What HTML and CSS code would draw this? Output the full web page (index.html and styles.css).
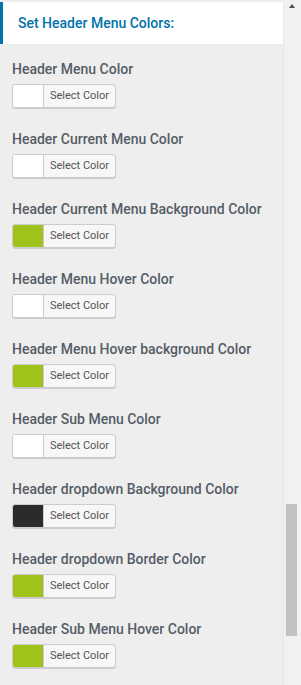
FILE: index.html
```html
<!DOCTYPE html>
<html lang="en">
<head>
  <meta charset="UTF-8">
  <title>Header Menu Colors</title>
  <link rel="stylesheet" href="styles.css">
</head>
<body>
  <div class="frame">
    <div class="panel">
      <h3 class="section-title">Set Header Menu Colors:</h3>

      <div class="control">
        <span class="control-label">Header Menu Color</span>
        <button class="color-btn"><span class="swatch swatch-white"></span><span class="btn-text">Select Color</span></button>
      </div>
      <div class="control">
        <span class="control-label">Header Current Menu Color</span>
        <button class="color-btn"><span class="swatch swatch-white"></span><span class="btn-text">Select Color</span></button>
      </div>
      <div class="control">
        <span class="control-label">Header Current Menu Background Color</span>
        <button class="color-btn"><span class="swatch swatch-green"></span><span class="btn-text">Select Color</span></button>
      </div>
      <div class="control">
        <span class="control-label">Header Menu Hover Color</span>
        <button class="color-btn"><span class="swatch swatch-white"></span><span class="btn-text">Select Color</span></button>
      </div>
      <div class="control">
        <span class="control-label">Header Menu Hover background Color</span>
        <button class="color-btn"><span class="swatch swatch-green"></span><span class="btn-text">Select Color</span></button>
      </div>
      <div class="control">
        <span class="control-label">Header Sub Menu Color</span>
        <button class="color-btn"><span class="swatch swatch-white"></span><span class="btn-text">Select Color</span></button>
      </div>
      <div class="control">
        <span class="control-label">Header dropdown Background Color</span>
        <button class="color-btn"><span class="swatch swatch-dark"></span><span class="btn-text">Select Color</span></button>
      </div>
      <div class="control">
        <span class="control-label">Header dropdown Border Color</span>
        <button class="color-btn"><span class="swatch swatch-green"></span><span class="btn-text">Select Color</span></button>
      </div>
      <div class="control">
        <span class="control-label">Header Sub Menu Hover Color</span>
        <button class="color-btn"><span class="swatch swatch-green"></span><span class="btn-text">Select Color</span></button>
      </div>
    </div>

    <div class="scrollbar">
      <span class="scroll-arrow"></span>
      <div class="scroll-thumb"></div>
    </div>
  </div>
</body>
</html>
```

FILE: styles.css
```css
body {
  margin: 0;
  background-color: #eeeeee;
  font-family: 'Roboto', 'Noto Sans', sans-serif;
  overflow: hidden;
}

.frame {
  display: flex;
  height: 685px;
}

.panel {
  flex: 1;
  padding-top: 2px;
  background-color: #eeeeee;
}

.section-title {
  margin: 0 0 6px 0;
  height: 42px;
  box-sizing: border-box;
  padding: 0 0 0 15px;
  border-left: 3px solid #0073aa;
  background-color: #fff;
  color: #0073aa;
  font-size: 14px;
  font-weight: 500;
  line-height: 42px;
}

.control {
  height: 70px;
  padding-left: 12px;
}

.control-label {
  display: block;
  color: #555d66;
  font-size: 14px;
  font-weight: 500;
  line-height: 20px;
  padding-top: 9px;
  margin-bottom: 5px;
}

.color-btn {
  display: flex;
  align-items: stretch;
  width: 104px;
  height: 24px;
  padding: 0;
  border: 1px solid #cccccc;
  border-radius: 3px;
  background-color: #f7f7f7;
  box-shadow: 0 1px 0 #cccccc;
  overflow: hidden;
}

.swatch {
  width: 30px;
  border-right: 1px solid #cccccc;
}

.swatch-white { background-color: #ffffff; }
.swatch-green { background-color: #9fc31a; }
.swatch-dark { background-color: #2b2b2b; }

.btn-text {
  flex: 1;
  color: #555555;
  font-family: 'Roboto', sans-serif;
  font-size: 11px;
  line-height: 22px;
  text-align: center;
}

.scrollbar {
  position: relative;
  width: 17px;
  background-color: #f1f1f1;
  border-left: 1px solid #e8e8e8;
}

.scroll-arrow {
  position: absolute;
  top: 4px;
  left: 5px;
  border-left: 3px solid transparent;
  border-right: 3px solid transparent;
  border-bottom: 4px solid #505050;
}

.scroll-thumb {
  position: absolute;
  top: 504px;
  left: 2px;
  width: 11px;
  height: 132px;
  background-color: #c1c1c1;
}
```
